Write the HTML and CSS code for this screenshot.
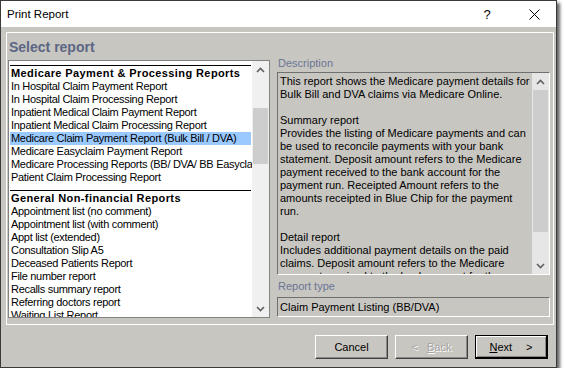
FILE: index.html
```html
<!doctype html>
<html lang="en">
<head>
    <meta charset="UTF-8">
    <title>Print Report</title>
    <link rel="stylesheet" href="styles.css">
</head>
<body>
    <div class="window">
        <div class="titlebar">
            <span class="title">Print Report</span>
            <span class="tb-btn help">?</span>
            <span class="tb-btn close">
                <svg width="11" height="11" viewBox="0 0 11 11"><path d="M0.5 0.5 L10.5 10.5 M10.5 0.5 L0.5 10.5" stroke="#000" stroke-width="1" fill="none"/></svg>
            </span>
        </div>
        <div class="body">
            <div class="panel">
                <h1 class="heading">Select report</h1>
                <div class="columns">
                    <div class="listbox">
                        <div class="list-items">
                            <div class="group">Medicare Payment &amp; Processing Reports</div>
                            <div class="item">In Hospital Claim Payment Report</div>
                            <div class="item">In Hospital Claim Processing Report</div>
                            <div class="item">Inpatient Medical Claim Payment Report</div>
                            <div class="item">Inpatient Medical Claim Processing Report</div>
                            <div class="item selected">Medicare Claim Payment Report (Bulk Bill / DVA)</div>
                            <div class="item">Medicare Easyclaim Payment Report</div>
                            <div class="item">Medicare Processing Reports (BB/ DVA/ BB Easyclaim)</div>
                            <div class="item">Patient Claim Processing Report</div>
                            <div class="group">General Non-financial Reports</div>
                            <div class="item">Appointment list (no comment)</div>
                            <div class="item">Appointment list (with comment)</div>
                            <div class="item">Appt list (extended)</div>
                            <div class="item">Consultation Slip A5</div>
                            <div class="item">Deceased Patients Report</div>
                            <div class="item">File number report</div>
                            <div class="item">Recalls summary report</div>
                            <div class="item">Referring doctors report</div>
                            <div class="item">Waiting List Report</div>
                        </div>
                        <div class="scrollbar list-scroll">
                            <span class="arrow"><svg width="9" height="6" viewBox="0 0 9 6"><path d="M1 5 L4.5 1.5 L8 5" stroke="#606060" stroke-width="1.6" fill="none"/></svg></span>
                            <span class="track"><span class="thumb"></span></span>
                            <span class="arrow"><svg width="9" height="6" viewBox="0 0 9 6"><path d="M1 1 L4.5 4.5 L8 1" stroke="#606060" stroke-width="1.6" fill="none"/></svg></span>
                        </div>
                    </div>
                    <div class="details">
                        <div class="label desc-label">Description</div>
                        <div class="desc-box">
                            <div class="desc-text">This report shows the Medicare payment details for
Bulk Bill and DVA claims via Medicare Online.

Summary report
Provides the listing of Medicare payments and can
be used to reconcile payments with your bank
statement. Deposit amount refers to the Medicare
payment received to the bank account for the
payment run. Receipted Amount refers to the
amounts receipted in Blue Chip for the payment
run.

Detail report
Includes additional payment details on the paid
claims. Deposit amount refers to the Medicare
payment received to the bank account for the payment</div>
                            <div class="scrollbar desc-scroll">
                                <span class="arrow"><svg width="9" height="6" viewBox="0 0 9 6"><path d="M1 5 L4.5 1.5 L8 5" stroke="#606060" stroke-width="1.6" fill="none"/></svg></span>
                                <span class="track"><span class="thumb"></span></span>
                                <span class="arrow"><svg width="9" height="6" viewBox="0 0 9 6"><path d="M1 1 L4.5 4.5 L8 1" stroke="#606060" stroke-width="1.6" fill="none"/></svg></span>
                            </div>
                        </div>
                        <div class="label type-label">Report type</div>
                        <div class="field">Claim Payment Listing (BB/DVA)</div>
                    </div>
                </div>
            </div>
            <div class="buttons">
                <button class="btn">Cancel</button>
                <button class="btn" disabled><span class="lt">&lt;</span><u>B</u>ack</button>
                <button class="btn default"><u>N</u>ext<span class="gt">&gt;</span></button>
            </div>
        </div>
    </div>
</body>
</html>
```

FILE: styles.css
```css
body {
    margin: 0;
    background: #fff;
    font-family: "Liberation Sans", Arial, sans-serif;
    font-size: 11px;
    color: #000;
}

.window {
    width: 555px;
    height: 366px;
    border: 1px solid #3a3a3a;
    background: #c8c6c0;
    box-shadow: 3px 3px 3px rgba(0, 0, 0, .6);
    display: flex;
    flex-direction: column;
}

.titlebar {
    height: 26px;
    background: #fff;
    display: flex;
    align-items: center;
    padding-left: 6px;
    font-size: 11.5px;
}

.title {
    flex: 1;
}

.tb-btn {
    height: 26px;
    display: flex;
    align-items: center;
    justify-content: center;
}

.help {
    width: 50px;
    font-size: 13px;
}

.close {
    width: 44px;
}

.body {
    flex: 1;
    display: flex;
    flex-direction: column;
    padding: 5px 2px 0 5px;
}

.panel {
    border: 1px solid #fff;
    height: 291px;
    padding: 0 3px 0 1px;
}

.heading {
    margin: 0;
    height: 22px;
    line-height: 28px;
    padding-left: 1px;
    font-size: 14px;
    font-weight: bold;
    color: #5b6685;
}

.columns {
    display: flex;
    gap: 7px;
}

/* report list */
.listbox {
    margin-top: 5px;
    width: 260px;
    height: 256px;
    border: 1px solid #828282;
    background: #fff;
    display: flex;
    overflow: hidden;
}

.list-items {
    flex: 1;
    padding: 0 1px;
    white-space: nowrap;
    overflow: hidden;
    letter-spacing: -0.3px;
}

.group {
    margin-top: 4px;
    border-top: 1px solid #000;
    height: 14px;
    line-height: 14px;
    padding-left: 1px;
    font-weight: bold;
    letter-spacing: 0.4px;
}

.item + .group {
    margin-top: 6px;
}

.item {
    height: 13px;
    line-height: 13px;
    padding-left: 1px;
}

.item.selected {
    background: #99c9ff;
}

.scrollbar {
    width: 17px;
    background: #f0f0f0;
    display: flex;
    flex-direction: column;
}

.scrollbar .arrow {
    height: 17px;
    display: flex;
    align-items: center;
    justify-content: center;
}

.scrollbar .track {
    flex: 1;
    position: relative;
}

.scrollbar .thumb {
    position: absolute;
    left: 1px;
    right: 1px;
}

.list-scroll .thumb {
    top: 30px;
    height: 56px;
    background: #cdcdcd;
}

/* description side */
.details {
    width: 273px;
    display: flex;
    flex-direction: column;
}

.label {
    padding-left: 1px;
    color: #6a7596;
}

.desc-label {
    height: 16px;
    line-height: 17px;
}

.type-label {
    margin-top: 4px;
    height: 14px;
    line-height: 14px;
}

.desc-box {
    margin-top: 1px;
    height: 201px;
    border: 1px solid;
    border-color: #6f6f6f #fff #fff #6f6f6f;
    display: flex;
    overflow: hidden;
}

.desc-text {
    flex: 1;
    height: 199px;
    padding: 2px 0 0 2px;
    white-space: pre-line;
    line-height: 13px;
    overflow: hidden;
}

.desc-scroll {
    background: #e6e6e6;
}

.desc-scroll .thumb {
    top: 0;
    height: 142px;
    background: #cdcdcd;
}

.field {
    margin-top: 4px;
    height: 18px;
    line-height: 18px;
    border: 1px solid;
    border-color: #6f6f6f #fff #fff #6f6f6f;
    padding-left: 2px;
}

/* dialog buttons */
.buttons {
    display: flex;
    justify-content: flex-end;
    gap: 7px;
    padding: 10px 6px 0 0;
}

.btn {
    width: 73px;
    height: 24px;
    box-sizing: border-box;
    margin: 0;
    padding: 0;
    background: #c8c6c0;
    border: 1px solid;
    border-color: #fff #404040 #404040 #fff;
    box-shadow: inset -1px -1px #888;
    font-family: "Liberation Sans", Arial, sans-serif;
    font-size: 11px;
    color: #000;
}

.btn:disabled {
    color: #a4a4a4;
    text-shadow: 1px 1px #fff;
}

.btn.default {
    border: 1px solid #000;
    border-width: 1px 2px 2px 1px;
    box-shadow: inset 1px 1px #fff, inset -1px -1px #888;
}

.lt {
    margin-right: 9px;
}

.gt {
    margin-left: 14px;
}
```
